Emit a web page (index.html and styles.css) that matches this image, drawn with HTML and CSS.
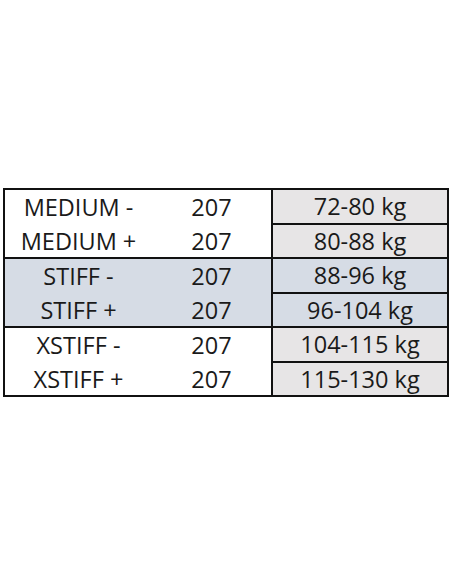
FILE: index.html
```html
<!DOCTYPE html>
<html>
<head>
<meta charset="utf-8">
<link rel="stylesheet" href="styles.css">
</head>
<body>
<div class="page">
  <div class="sizes">
    <div class="grp">
      <div class="cell">MEDIUM -</div><div class="cell">207</div><div class="cell kg grey first">72-80 kg</div>
      <div class="cell">MEDIUM +</div><div class="cell">207</div><div class="cell kg grey">80-88 kg</div>
    </div>
    <div class="grp blue">
      <div class="cell">STIFF -</div><div class="cell">207</div><div class="cell kg first">88-96 kg</div>
      <div class="cell">STIFF +</div><div class="cell">207</div><div class="cell kg">96-104 kg</div>
    </div>
    <div class="grp">
      <div class="cell">XSTIFF -</div><div class="cell">207</div><div class="cell kg grey first">104-115 kg</div>
      <div class="cell">XSTIFF +</div><div class="cell">207</div><div class="cell kg grey">115-130 kg</div>
    </div>
  </div>
</div>
</body>
</html>
```

FILE: styles.css
```css
html, body {
  margin: 0;
  padding: 0;
  background: #ffffff;
}
.page {
  padding: 188px 0 0 3px;
}
.sizes {
  box-sizing: border-box;
  width: 446px;
  border: 2px solid #111;
  font-family: "Open Sans", "Liberation Sans", sans-serif;
  font-size: 23.5px;
  color: #1a1a1a;
}
.grp {
  display: grid;
  grid-template-columns: 147px 119px 1fr;
  grid-template-rows: 34.5px 32.5px;
}
.grp + .grp {
  border-top: 2px solid #111;
}
.blue {
  background: #d6dce5;
}
.cell {
  box-sizing: border-box;
  display: flex;
  align-items: center;
  justify-content: center;
  line-height: 1;
  padding-top: 1px;
}
.kg {
  border-left: 2px solid #111;
}
.first {
  border-bottom: 2px solid #111;
}
.grey {
  background: #e7e5e6;
}
```
